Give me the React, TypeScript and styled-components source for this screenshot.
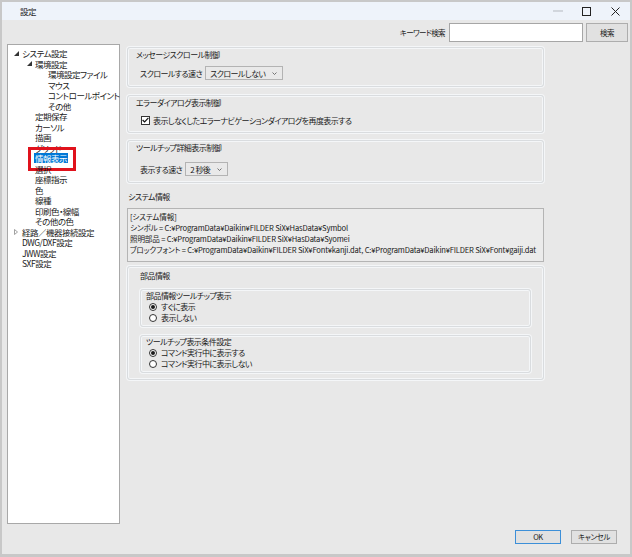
import { createGlobalStyle, styled } from "styled-components";

const GlobalStyle = createGlobalStyle`
  html, body {
    margin: 0;
    padding: 0;
    background: #ffffff;
  }
  body {
    font-family: "Noto Sans CJK JP", "Noto Sans", sans-serif;
    font-size: 8.5px;
    letter-spacing: -0.5px;
    color: #1a1a1a;
    font-feature-settings: "palt";
  }
  * {
    box-sizing: border-box;
  }
`;

const Window = styled.div`
  width: 632px;
  height: 557px;
  border: 2px solid #c8c8c8;
  border-bottom-width: 3px;
  display: flex;
  flex-direction: column;
  background: #e8e8e8;
`;

const TitleBar = styled.div`
  height: 18px;
  flex: none;
  display: flex;
  align-items: center;
  background: #eef3fa;
  padding-left: 18px;
`;

const WinControls = styled.div`
  margin-left: auto;
  display: flex;
  height: 100%;
`;

const WinButton = styled.div`
  width: 29px;
  height: 100%;
  display: flex;
  align-items: center;
  justify-content: center;
`;

const Body = styled.div`
  flex: 1;
  display: flex;
  flex-direction: column;
  padding: 3px 2px 0 5px;
`;

const SearchRow = styled.div`
  height: 19px;
  display: flex;
  justify-content: flex-end;
  align-items: center;
  gap: 3px;
`;

const SearchLabel = styled.span`
  margin-right: 1px;
  font-size: 7.5px;
  letter-spacing: -0.6px;
`;

const SearchInput = styled.div`
  width: 134px;
  height: 19px;
  background: #ffffff;
  border: 1px solid #a6a6a6;
`;

const PushButton = styled.div<{ $w: number; $h: number; $default?: boolean }>`
  width: ${(p) => p.$w}px;
  height: ${(p) => p.$h}px;
  display: flex;
  align-items: center;
  justify-content: center;
  background: #e1e1e1;
  border: 1px solid ${(p) => (p.$default ? "#3c8fd8" : "#adadad")};
  font-size: 7.5px;
  letter-spacing: -0.4px;
  line-height: 1;
`;

const Main = styled.div`
  height: 480px;
  margin-top: 2px;
  display: flex;
  gap: 7px;
`;

const Tree = styled.div`
  width: 113px;
  flex: none;
  background: #ffffff;
  border: 1px solid #a8a8a8;
  padding-top: 3px;
`;

const TreeRow = styled.div<{ $level: number }>`
  height: 10.5px;
  line-height: 10.5px;
  display: flex;
  align-items: center;
  padding-left: ${(p) => p.$level * 13 + 6}px;
  white-space: nowrap;
`;

const Arrow = styled.span`
  width: 8px;
  flex: none;
  display: flex;
  align-items: center;
`;

const NodeLabel = styled.span<{ $selected?: boolean }>`
  position: relative;
  height: 10px;
  line-height: 10px;
  padding: 0 1px;
  margin-left: -1px;
  background: ${(p) => (p.$selected ? "#0078d7" : "transparent")};
  color: ${(p) => (p.$selected ? "#ffffff" : "inherit")};
`;

const Marker = styled.span`
  position: absolute;
  left: -6px;
  right: -8px;
  top: -6px;
  bottom: -8px;
  border: 3px solid #e0121c;
  pointer-events: none;
`;

const Content = styled.div`
  width: 417px;
  display: flex;
  flex-direction: column;
  font-size: 8px;
  letter-spacing: -0.55px;
`;

const GroupBox = styled.div<{ $mt: number; $pt?: number; $px?: number }>`
  margin-top: ${(p) => p.$mt}px;
  border: 1px solid #d9dcdf;
  border-radius: 3px;
  box-shadow: 0 0 0 1px #f4f6f8, inset 0 0 0 1px #f4f6f8;
  padding: ${(p) => p.$pt ?? 1}px ${(p) => p.$px ?? 8}px 6px;
`;

const InnerGroup = styled.div<{ $mt: number }>`
  margin-top: ${(p) => p.$mt}px;
  border: 1px solid #d9dcdf;
  border-radius: 3px;
  box-shadow: 0 0 0 1px #f4f6f8, inset 0 0 0 1px #f4f6f8;
  padding: 1px 5px 3px;
`;

const Legend = styled.div<{ $lh?: number }>`
  line-height: ${(p) => p.$lh ?? 11}px;
`;

const FieldRow = styled.div<{ $mt: number }>`
  margin-top: ${(p) => p.$mt}px;
  display: flex;
  align-items: center;
  gap: 3px;
  padding-left: 4px;
`;

const Combo = styled.div`
  height: 14px;
  display: flex;
  align-items: center;
  gap: 7px;
  padding: 0 5px 0 4px;
  background: #e9e9e9;
  border: 1px solid #b3b3b3;
`;

const CheckRow = styled.div<{ $mt: number }>`
  margin-top: ${(p) => p.$mt}px;
  height: 12px;
  display: flex;
  align-items: center;
  gap: 3px;
  padding-left: 5px;
`;

const CheckBox = styled.span`
  width: 9px;
  height: 9px;
  display: flex;
  align-items: center;
  justify-content: center;
  background: #ffffff;
  border: 1px solid #333333;
`;

const SectionLabel = styled.div`
  margin-top: 8px;
  line-height: 11px;
  padding-left: 1px;
`;

const InfoBox = styled.div`
  margin-top: 6px;
  height: 54px;
  border: 1px solid #b4b4b4;
  background: #ebebeb;
  padding: 2px 2px 0;
  font-size: 7.6px;
  letter-spacing: -0.18px;
  line-height: 11px;
  white-space: nowrap;
  overflow: hidden;
`;

const RadioRow = styled.div`
  height: 11px;
  display: flex;
  align-items: center;
  gap: 4px;
  padding-left: 3px;
`;

const Radio = styled.span<{ $on?: boolean }>`
  width: 8px;
  height: 8px;
  border-radius: 50%;
  border: 1px solid #333333;
  background: #ffffff;
  display: flex;
  align-items: center;
  justify-content: center;
  &::after {
    content: "";
    width: 4px;
    height: 4px;
    border-radius: 50%;
    background: ${(p) => (p.$on ? "#1a1a1a" : "transparent")};
  }
`;

const Footer = styled.div`
  margin-top: 6px;
  display: flex;
  justify-content: flex-end;
  gap: 10px;
  padding-right: 11px;
`;

type Node = {
  label: string;
  level: number;
  arrow?: "open" | "closed";
  selected?: boolean;
};

const nodes: Node[] = [
  { label: "システム設定", level: 0, arrow: "open" },
  { label: "環境設定", level: 1, arrow: "open" },
  { label: "環境設定ファイル", level: 2 },
  { label: "マウス", level: 2 },
  { label: "コントロールポイント", level: 2 },
  { label: "その他", level: 2 },
  { label: "定期保存", level: 1 },
  { label: "カーソル", level: 1 },
  { label: "描画", level: 1 },
  { label: "グリッド", level: 1 },
  { label: "情報表示", level: 1, selected: true },
  { label: "選択", level: 1 },
  { label: "座標指示", level: 1 },
  { label: "色", level: 1 },
  { label: "線種", level: 1 },
  { label: "印刷色・線幅", level: 1 },
  { label: "その他の色", level: 1 },
  { label: "経路／機器接続設定", level: 0, arrow: "closed" },
  { label: "DWG/DXF設定", level: 0 },
  { label: "JWW設定", level: 0 },
  { label: "SXF設定", level: 0 },
];

const infoLines = [
  "[システム情報]",
  "シンボル = C:¥ProgramData¥Daikin¥FILDER SiX¥HasData¥Symbol",
  "照明部品 = C:¥ProgramData¥Daikin¥FILDER SiX¥HasData¥Syomei",
  "ブロックフォント = C:¥ProgramData¥Daikin¥FILDER SiX¥Font¥kanji.dat, C:¥ProgramData¥Daikin¥FILDER SiX¥Font¥gaiji.dat",
];

function Chevron() {
  return (
    <svg width="5" height="3" viewBox="0 0 5 3">
      <path d="M0.5 0.5 L2.5 2.5 L4.5 0.5" fill="none" stroke="#555" strokeWidth="0.8" />
    </svg>
  );
}

function TreeArrow({ kind }: { kind: "open" | "closed" }) {
  if (kind === "open") {
    return (
      <svg width="5" height="5" viewBox="0 0 5 5">
        <path d="M5 0 L5 5 L0 5 Z" fill="#333" />
      </svg>
    );
  }
  return (
    <svg width="4" height="6" viewBox="0 0 4 6">
      <path d="M0.5 0.5 L3.5 3 L0.5 5.5 Z" fill="none" stroke="#8a8a8a" strokeWidth="0.8" />
    </svg>
  );
}

export default function App() {
  return (
    <>
      <GlobalStyle />
      <Window>
        <TitleBar>
          <span>設定</span>
          <WinControls>
            <WinButton>
              <svg width="10" height="2" viewBox="0 0 10 2">
                <path d="M0 1 H10" stroke="#b5b9bf" strokeWidth="1" />
              </svg>
            </WinButton>
            <WinButton>
              <svg width="9" height="9" viewBox="0 0 9 9">
                <rect x="0.5" y="0.5" width="8" height="8" fill="none" stroke="#222" strokeWidth="1" />
              </svg>
            </WinButton>
            <WinButton>
              <svg width="9" height="9" viewBox="0 0 9 9">
                <path d="M0.5 0.5 L8.5 8.5 M8.5 0.5 L0.5 8.5" stroke="#222" strokeWidth="1" />
              </svg>
            </WinButton>
          </WinControls>
        </TitleBar>
        <Body>
          <SearchRow>
            <SearchLabel>キーワード検索</SearchLabel>
            <SearchInput />
            <PushButton $w={42} $h={19}>検索</PushButton>
          </SearchRow>
          <Main>
            <Tree>
              {nodes.map((n) => (
                <TreeRow key={n.label} $level={n.level}>
                  <Arrow>{n.arrow && <TreeArrow kind={n.arrow} />}</Arrow>
                  <NodeLabel $selected={n.selected}>
                    {n.label}
                    {n.selected && <Marker />}
                  </NodeLabel>
                </TreeRow>
              ))}
            </Tree>
            <Content>
              <GroupBox $mt={3}>
                <Legend>メッセージスクロール制御</Legend>
                <FieldRow $mt={6}>
                  <span>スクロールする速さ</span>
                  <Combo>
                    <span>スクロールしない</span>
                    <Chevron />
                  </Combo>
                </FieldRow>
              </GroupBox>
              <GroupBox $mt={8}>
                <Legend>エラーダイアログ表示制御</Legend>
                <CheckRow $mt={6}>
                  <CheckBox>
                    <svg width="7" height="6" viewBox="0 0 7 6">
                      <path d="M0.6 3 L2.6 5 L6.4 0.8" fill="none" stroke="#111" strokeWidth="1.2" />
                    </svg>
                  </CheckBox>
                  <span>表示しなくしたエラーナビゲーションダイアログを再度表示する</span>
                </CheckRow>
              </GroupBox>
              <GroupBox $mt={7}>
                <Legend>ツールチップ詳細表示制御</Legend>
                <FieldRow $mt={9}>
                  <span>表示する速さ</span>
                  <Combo>
                    <span>2 秒後</span>
                    <Chevron />
                  </Combo>
                </FieldRow>
              </GroupBox>
              <SectionLabel>システム情報</SectionLabel>
              <InfoBox>
                {infoLines.map((l) => (
                  <div key={l}>{l}</div>
                ))}
              </InfoBox>
              <GroupBox $mt={4} $pt={3} $px={12}>
                <Legend>部品情報</Legend>
                <InnerGroup $mt={8}>
                  <Legend $lh={10}>部品情報ツールチップ表示</Legend>
                  <RadioRow>
                    <Radio $on />
                    <span>すぐに表示</span>
                  </RadioRow>
                  <RadioRow>
                    <Radio />
                    <span>表示しない</span>
                  </RadioRow>
                </InnerGroup>
                <InnerGroup $mt={8}>
                  <Legend $lh={10}>ツールチップ表示条件設定</Legend>
                  <RadioRow>
                    <Radio $on />
                    <span>コマンド実行中に表示する</span>
                  </RadioRow>
                  <RadioRow>
                    <Radio />
                    <span>コマンド実行中に表示しない</span>
                  </RadioRow>
                </InnerGroup>
              </GroupBox>
            </Content>
          </Main>
          <Footer>
            <PushButton $w={46} $h={14} $default>OK</PushButton>
            <PushButton $w={46} $h={14}>キャンセル</PushButton>
          </Footer>
        </Body>
      </Window>
    </>
  );
}
